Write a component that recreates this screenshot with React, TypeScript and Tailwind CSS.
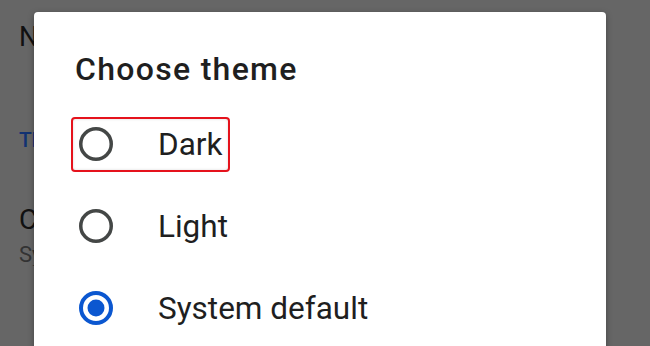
import React from "react";

function Radio({ selected }: { selected?: boolean }) {
  if (selected) {
    return (
      <svg width="34" height="34" viewBox="0 0 34 34" className="shrink-0">
        <circle cx="17" cy="17" r="15" fill="none" stroke="#0b57d0" strokeWidth="4" />
        <circle cx="17" cy="17" r="8.5" fill="#0b57d0" />
      </svg>
    );
  }
  return (
    <svg width="34" height="34" viewBox="0 0 34 34" className="shrink-0">
      <circle cx="17" cy="17" r="15.25" fill="none" stroke="#444746" strokeWidth="3.5" />
    </svg>
  );
}

function Option({ label, selected, highlight }: { label: string; selected?: boolean; highlight?: boolean }) {
  return (
    <div className="h-[82px] flex items-center pl-[37px]">
      <div
        className={
          highlight
            ? "h-[55px] flex items-center gap-[45px] pl-[6px] pr-[6px] border-2 border-[#e5121c] rounded-[4px] shadow-[inset_0_0_3px_rgba(0,0,0,0.15)]"
            : "h-[55px] flex items-center gap-[45px] pl-[6px] pr-[6px] border-2 border-transparent"
        }
      >
        <Radio selected={selected} />
        <span className="text-[31.5px] leading-[31px] text-[#1f1f1f]">{label}</span>
      </div>
    </div>
  );
}

export default function App() {
  return (
    <div className="relative w-[650px] h-[346px] overflow-hidden bg-[#666666] font-['Roboto',sans-serif]">
      <div className="w-[34px] overflow-hidden">
        <div className="flex flex-col pl-[19px] pt-[24px] whitespace-nowrap">
          <div className="text-[27px] leading-[27px] text-[#111111]">Notifications</div>
          <div className="mt-[79px] text-[21px] leading-[21px] font-medium text-[#123272]">Theme</div>
          <div className="mt-[55px] text-[28px] leading-[28px] text-[#111111]">Choose theme</div>
          <div className="mt-[10px] text-[22px] leading-[22px] text-[#333333]">System default</div>
        </div>
      </div>

      <div className="absolute left-[34px] top-[12px] w-[572px] h-[400px] bg-white rounded-[4px] shadow-[0_2px_6px_rgba(0,0,0,0.35)]">
        <div className="pl-[41px] pt-[41px] text-[32px] leading-[32px] font-medium tracking-[1.3px] text-[#1f1f1f]">
          Choose theme
        </div>
        <div className="mt-[18px] flex flex-col">
          <Option label="Dark" highlight />
          <Option label="Light" />
          <Option label="System default" selected />
        </div>
      </div>
    </div>
  );
}
